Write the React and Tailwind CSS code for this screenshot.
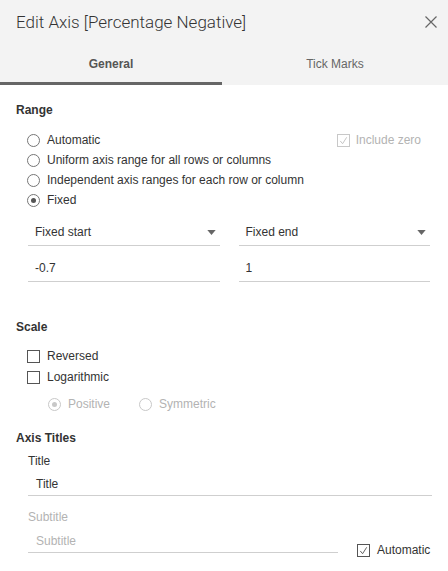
import { useState } from "react";

function Radio({ checked, disabled }) {
  const ring = disabled ? "border-[#c8c8c8]" : "border-[#767676]";
  const dot = disabled ? "bg-[#c8c8c8]" : "bg-[#555]";
  return (
    <span
      className={`flex size-[13px] shrink-0 items-center justify-center rounded-full border bg-white ${ring}`}
    >
      {checked && <span className={`size-[5px] rounded-full ${dot}`} />}
    </span>
  );
}

function Check({ checked, disabled }) {
  const border = disabled ? "border-[#c8c8c8]" : "border-[#555]";
  const stroke = disabled ? "#c0c0c0" : "#555";
  return (
    <span
      className={`flex size-[13px] shrink-0 items-center justify-center border bg-white ${border}`}
    >
      {checked && (
        <svg viewBox="0 0 12 12" className="size-[11px]">
          <path d="M2.5 6.5l2.5 3 4.5-7" fill="none" stroke={stroke} strokeWidth="1" />
        </svg>
      )}
    </span>
  );
}

function Caret() {
  return (
    <svg viewBox="0 0 10 6" className="h-[5px] w-[9px]">
      <path d="M0 0h10L5 6z" fill="#666" />
    </svg>
  );
}

export default function App() {
  const [range, setRange] = useState("fixed");

  const ranges = [
    ["auto", "Automatic"],
    ["uniform", "Uniform axis range for all rows or columns"],
    ["independent", "Independent axis ranges for each row or column"],
    ["fixed", "Fixed"],
  ];

  return (
    <div
      className="h-[571px] w-[448px] overflow-hidden bg-white text-[12px] leading-[14px] text-[#333]"
      style={{ fontFamily: '"Liberation Sans", Arial, sans-serif' }}
    >
      <div className="bg-[#f3f3f3]">
        <div className="flex h-[42px] items-center justify-between pl-4 pr-[11px] pt-[1px]">
          <div
            className="text-[17px] font-light leading-[20px] text-[#333]"
            style={{ fontFamily: "Roboto, sans-serif" }}
          >
            Edit Axis [Percentage Negative]
          </div>
          <svg viewBox="0 0 12 12" className="size-[12px]">
            <path d="M0.5 0.5l11 11M11.5 0.5l-11 11" stroke="#666" strokeWidth="1.2" />
          </svg>
        </div>
        <div className="flex h-[43px]">
          <div className="flex w-[222px] flex-col">
            <div className="flex flex-1 items-center justify-center pt-[4px] font-bold text-[#555]">
              General
            </div>
            <div className="h-[3px] bg-[#666]" />
          </div>
          <div className="flex flex-1 flex-col">
            <div className="flex flex-1 items-center justify-center pt-[4px] text-[#666]">
              Tick Marks
            </div>
            <div className="h-[3px]" />
          </div>
        </div>
      </div>

      <div className="px-4 pt-[18px]">
        <div className="font-bold text-[#333]">Range</div>
        <div className="relative mt-[16px] flex flex-col gap-[6px] pl-[11px]">
          {ranges.map(([key, label]) => (
            <label
              key={key}
              className="flex h-[14px] cursor-pointer items-center gap-[7px]"
              onClick={() => setRange(key)}
            >
              <Radio checked={range === key} />
              <span>{label}</span>
            </label>
          ))}
          <div className="absolute right-[11px] top-0 flex h-[14px] items-center gap-[6px] text-[#b3b3b3]">
            <Check checked disabled />
            <span>Include zero</span>
          </div>
        </div>

        <div className="mt-[13px] grid grid-cols-2 gap-[19px] pl-[12px] pr-[2px]">
          {["Fixed start", "Fixed end"].map((t) => (
            <div
              key={t}
              className="flex h-[26px] items-center justify-between border-b border-[#cfcfcf] pl-[7px] pr-[4px] pb-[1px]"
            >
              <span>{t}</span>
              <Caret />
            </div>
          ))}
        </div>
        <div className="mt-[8px] grid grid-cols-2 gap-[19px] pl-[12px] pr-[2px]">
          {["-0.7", "1"].map((v) => (
            <div
              key={v}
              className="flex h-[28px] items-center border-b border-[#cfcfcf] pl-[7px]"
            >
              {v}
            </div>
          ))}
        </div>

        <div className="mt-[38px] font-bold">Scale</div>
        <div className="mt-[15px] flex flex-col gap-[7px] pl-[11px]">
          <div className="flex h-[14px] items-center gap-[7px]">
            <Check />
            <span>Reversed</span>
          </div>
          <div className="flex h-[14px] items-center gap-[7px]">
            <Check />
            <span>Logarithmic</span>
          </div>
          <div className="mt-[6px] flex h-[14px] items-center pl-[21px] text-[#b3b3b3]">
            <div className="flex items-center gap-[7px]">
              <Radio checked disabled />
              <span>Positive</span>
            </div>
            <div className="ml-[29px] flex items-center gap-[7px]">
              <Radio disabled />
              <span>Symmetric</span>
            </div>
          </div>
        </div>

        <div className="mt-[20px] font-bold">Axis Titles</div>
        <div className="pl-[12px]">
          <div className="mt-[9px]">Title</div>
          <div className="mt-[4px] flex h-[24px] items-center border-b border-[#cfcfcf] pl-[8px]">
            Title
          </div>
          <div className="mt-[14px] text-[#b3b3b3]">Subtitle</div>
          <div className="flex items-end">
            <div className="mt-[5px] flex h-[24px] flex-1 items-center border-b border-[#cfcfcf] pl-[8px] text-[#b3b3b3]">
              Subtitle
            </div>
            <div className="mb-[-4px] ml-[19px] flex h-[14px] w-[75px] items-center gap-[7px]">
              <Check checked />
              <span>Automatic</span>
            </div>
          </div>
        </div>
      </div>
    </div>
  );
}
